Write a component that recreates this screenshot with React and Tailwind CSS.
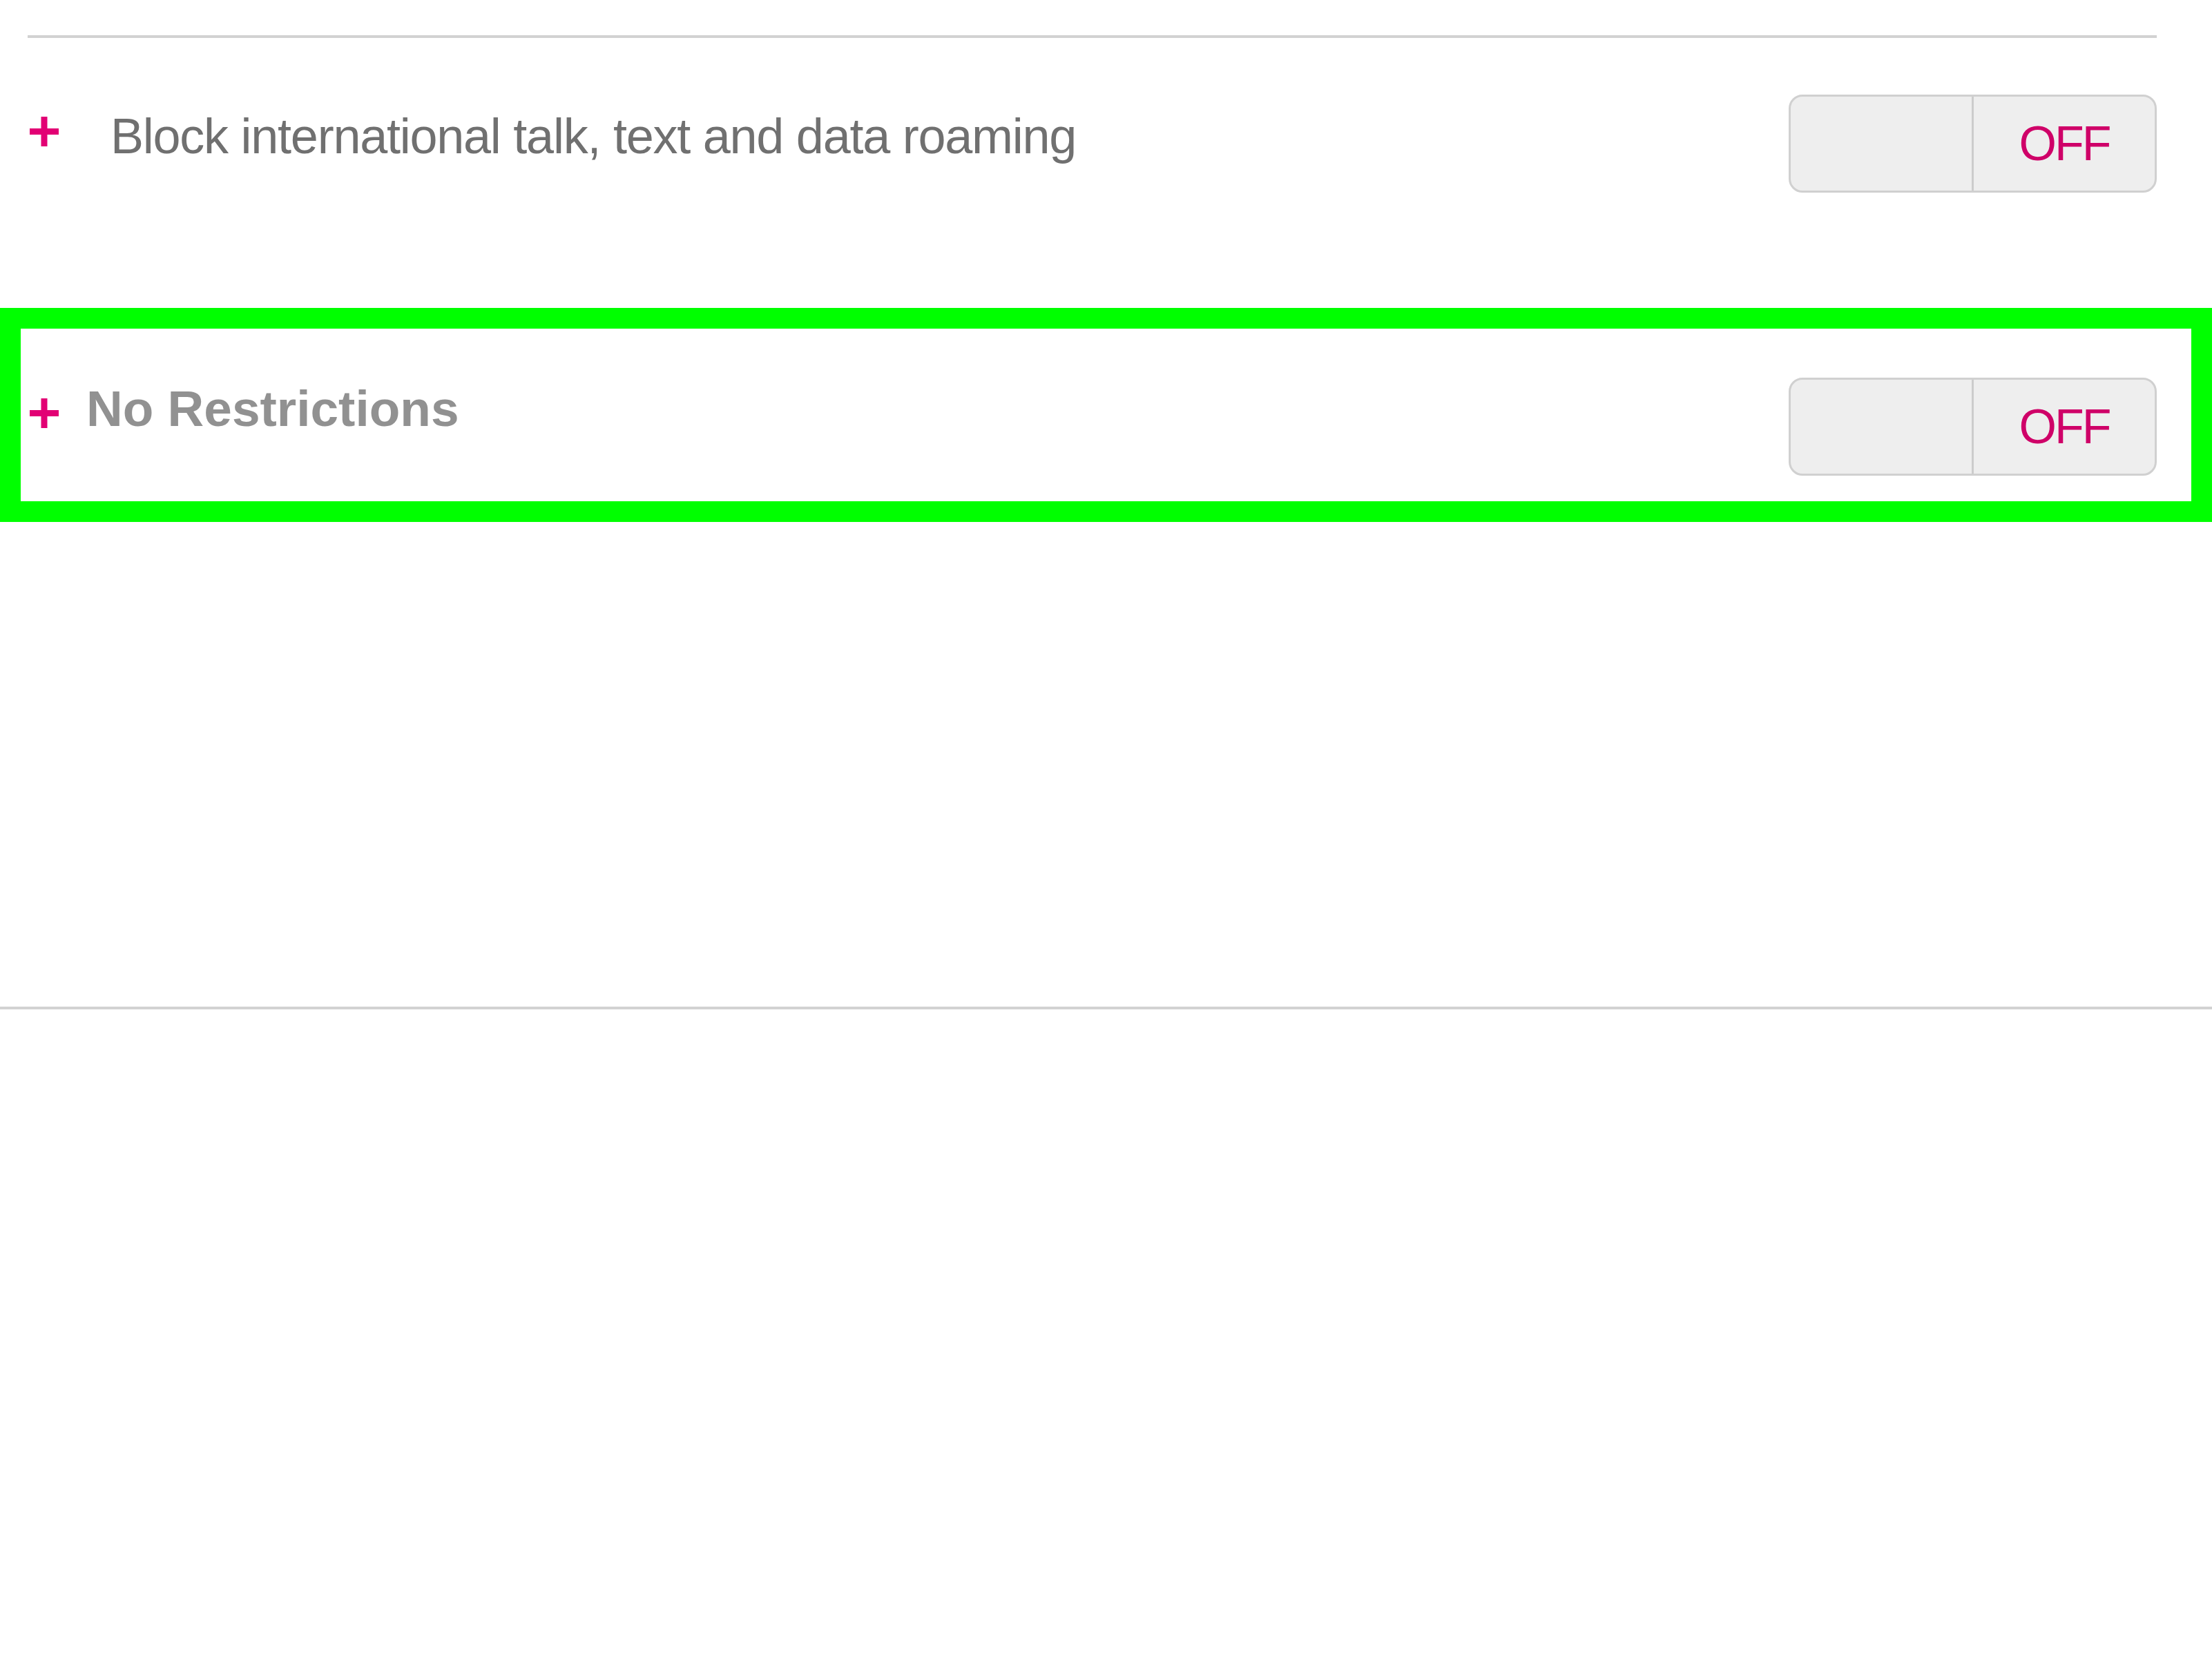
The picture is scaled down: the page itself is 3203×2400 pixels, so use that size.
import React from "react";

function Plus() {
  return (
    <svg width="42" height="43" viewBox="0 0 42 43" className="block shrink-0">
      <rect x="0" y="17" width="42" height="9" fill="#e20074" />
      <rect x="16.5" y="0" width="9" height="43" fill="#e20074" />
    </svg>
  );
}

function Toggle() {
  return (
    <div className="flex h-[142px] w-[533px] shrink-0 overflow-hidden rounded-[20px] border-[3px] border-[#d0d0d0] bg-[#eeeeee]">
      <div className="w-[265px] shrink-0 border-r-[3px] border-[#cccccc]" />
      <div className="flex flex-1 items-center justify-center">
        <span
          className="text-[70px] leading-none tracking-[-3px] text-[#cf0068]"
          style={{ fontFamily: '"Liberation Sans", Arial, sans-serif' }}
        >
          OFF
        </span>
      </div>
    </div>
  );
}

export default function App() {
  return (
    <div
      className="min-h-[2400px] w-full bg-white"
      style={{ fontFamily: '"Liberation Sans", Arial, sans-serif' }}
    >
      <div className="h-[51px]" />
      <div className="ml-[40px] mr-[80px] h-[4px] bg-[#d2d2d2]" />

      <div className="flex h-[391px] items-start">
        <div className="ml-[43px] mt-[114px]">
          <Plus />
        </div>
        <div className="ml-[75px] mt-[106px] text-[72px] leading-none tracking-[-1.25px] text-[#707070]">
          Block international talk, text and data roaming
        </div>
        <div className="ml-auto mr-[80px] mt-[82px]">
          <Toggle />
        </div>
      </div>

      <div className="box-border flex h-[310px] items-start border-[30px] border-[#00ff00]">
        <div className="ml-[13px] mt-[101px]">
          <Plus />
        </div>
        <div className="ml-[40px] mt-[79px] text-[73px] font-bold leading-none text-[#919191]">
          No Restrictions
        </div>
        <div className="ml-auto mr-[50px] mt-[71px]">
          <Toggle />
        </div>
      </div>

      <div className="mt-[702px] h-[4px] w-full bg-[#d2d2d2]" />
    </div>
  );
}
